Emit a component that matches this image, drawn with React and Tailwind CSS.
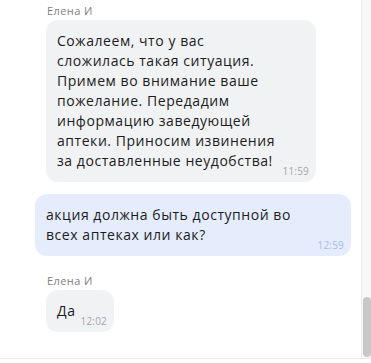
import React from 'react';

const messages = [
    {
        id: 1,
        author: 'Елена И',
        incoming: true,
        lines: [
            'Сожалеем, что у вас',
            'сложилась такая ситуация.',
            'Примем во внимание ваше',
            'пожелание. Передадим',
            'информацию заведующей',
            'аптеки. Приносим извинения',
            'за доставленные неудобства!',
        ],
        time: '11:59',
        width: 'w-[270px]',
    },
    {
        id: 2,
        incoming: false,
        lines: ['акция должна быть доступной во', 'всех аптеках или как?'],
        time: '12:59',
        width: 'w-[316px]',
    },
    {
        id: 3,
        author: 'Елена И',
        incoming: true,
        lines: ['Да'],
        time: '12:02',
        width: '',
    },
];

const Bubble = ({ msg }) => (
    <div
        className={`flex items-end gap-[5px] rounded-[12px] pl-[11px] pr-[7px] pt-[11px] pb-[5px] ${msg.width} ${
            msg.incoming ? 'bg-[#f1f2f4]' : 'bg-[#e5edfd]'
        }`}
    >
        <div className="flex-1 pb-[6px] text-[14px] leading-[20px] tracking-[0.55px] text-[#1c1c1c] whitespace-nowrap">
            {msg.lines.map((line, i) => (
                <div key={i}>{line}</div>
            ))}
        </div>
        <div
            className={`text-[10px] leading-[12px] tracking-[0.2px] ${
                msg.incoming ? 'text-[#a4a5ab]' : 'text-[#a8b8f2]'
            }`}
        >
            {msg.time}
        </div>
    </div>
);

const App = () => {
    return (
        <div className="w-[371px] h-[363px] bg-white overflow-hidden" style={{ fontFamily: '"Open Sans", sans-serif' }}>
            <div className="flex h-[359px] border-b border-[#e9e9e9]">
                <div className="flex-1 flex flex-col pt-[4px]">
                    {/* first incoming */}
                    <div className="ml-[46px] flex flex-col items-start">
                        <div className="text-[11px] leading-[14px] tracking-[0.4px] text-[#7f7f7f] ml-[1px]">{messages[0].author}</div>
                        <div className="mt-[2px]">
                            <Bubble msg={messages[0]} />
                        </div>
                    </div>

                    {/* outgoing */}
                    <div className="mt-[12px] mr-[10px] flex justify-end">
                        <Bubble msg={messages[1]} />
                    </div>

                    {/* second incoming */}
                    <div className="ml-[46px] mt-[18px] flex flex-col items-start">
                        <div className="text-[11px] leading-[14px] tracking-[0.4px] text-[#7f7f7f] ml-[1px]">{messages[2].author}</div>
                        <div className="mt-[2px]">
                            <Bubble msg={messages[2]} />
                        </div>
                    </div>
                </div>

                {/* scrollbar */}
                <div className="w-[10px] bg-[#f8f8f8] border-l border-[#ededed] flex flex-col justify-end pb-[1px]">
                    <div className="mx-auto w-[8px] h-[60px] rounded-full bg-[#c8c8c8]" />
                </div>
            </div>
        </div>
    );
};

export default App;
